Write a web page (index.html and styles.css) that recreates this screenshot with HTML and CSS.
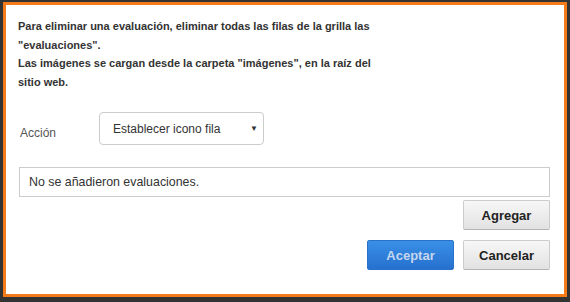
FILE: index.html
```html
<!DOCTYPE html>
<html>
<head>
<meta charset="utf-8">
<link rel="stylesheet" href="styles.css">
</head>
<body>
<div class="dialog">
  <div class="info">
    <p>Para eliminar una evaluación, eliminar todas las filas de la grilla las "evaluaciones".</p>
    <p>Las imágenes se cargan desde la carpeta "imágenes", en la raíz del sitio web.</p>
  </div>
  <div class="row">
    <span class="label">Acción</span>
    <div class="select"><span>Establecer icono fila</span><span class="arrow">▼</span></div>
  </div>
  <div class="list">No se añadieron evaluaciones.</div>
  <div class="add-row"><button class="btn">Agregar</button></div>
  <div class="footer">
    <button class="btn primary">Aceptar</button>
    <button class="btn">Cancelar</button>
  </div>
</div>
</body>
</html>
```
FILE: styles.css
```css
html, body {
  margin: 0;
  padding: 0;
  background: #333333;
  width: 570px;
  height: 302px;
  overflow: hidden;
}
.dialog {
  box-sizing: border-box;
  margin: 2px 0 0 3px;
  width: 564px;
  height: 295px;
  background: #fff;
  border: 3px solid #f57a1a;
  padding: 12px 12px 0 12px;
  font-family: "Liberation Sans", Arial, sans-serif;
}
.info {
  width: 378px;
  font-size: 11px;
  font-weight: bold;
  color: #333;
  line-height: 18.5px;
}
.info p { margin: 0; }
.row {
  display: flex;
  align-items: flex-start;
  margin-top: 21px;
}
.label {
  width: 79px;
  padding-left: 2px;
  font-size: 12px;
  color: #555;
  margin-top: 14px;
}
.select {
  box-sizing: border-box;
  width: 165px;
  height: 33px;
  border: 1px solid #ccc;
  border-radius: 4px;
  display: flex;
  align-items: center;
  justify-content: space-between;
  padding: 0 5px 0 13px;
  font-size: 12px;
  color: #333;
}
.arrow { font-size: 8px; color: #333; }
.list {
  box-sizing: border-box;
  margin-top: 22px;
  margin-left: 1px;
  width: 531px;
  height: 30px;
  border: 1px solid #ccc;
  padding: 0 9px;
  display: flex;
  align-items: center;
  font-size: 12.4px;
  color: #333;
}
.add-row {
  display: flex;
  justify-content: flex-end;
  width: 532px;
  margin-top: 3px;
}
.footer {
  display: flex;
  justify-content: flex-end;
  gap: 9px;
  width: 532px;
  margin-top: 10px;
}
.btn {
  box-sizing: border-box;
  width: 87px;
  height: 30px;
  border: 1px solid #ccc;
  border-bottom-color: #b3b3b3;
  border-radius: 2px;
  background: linear-gradient(#f7f7f7, #e2e2e2);
  font-family: "Liberation Sans", Arial, sans-serif;
  font-size: 13px;
  font-weight: bold;
  color: #222;
  padding: 0;
}
.btn.primary {
  background: linear-gradient(#3990e6, #2670cf);
  border-color: #2a72c8;
  color: #c5d6ee;
}
```
